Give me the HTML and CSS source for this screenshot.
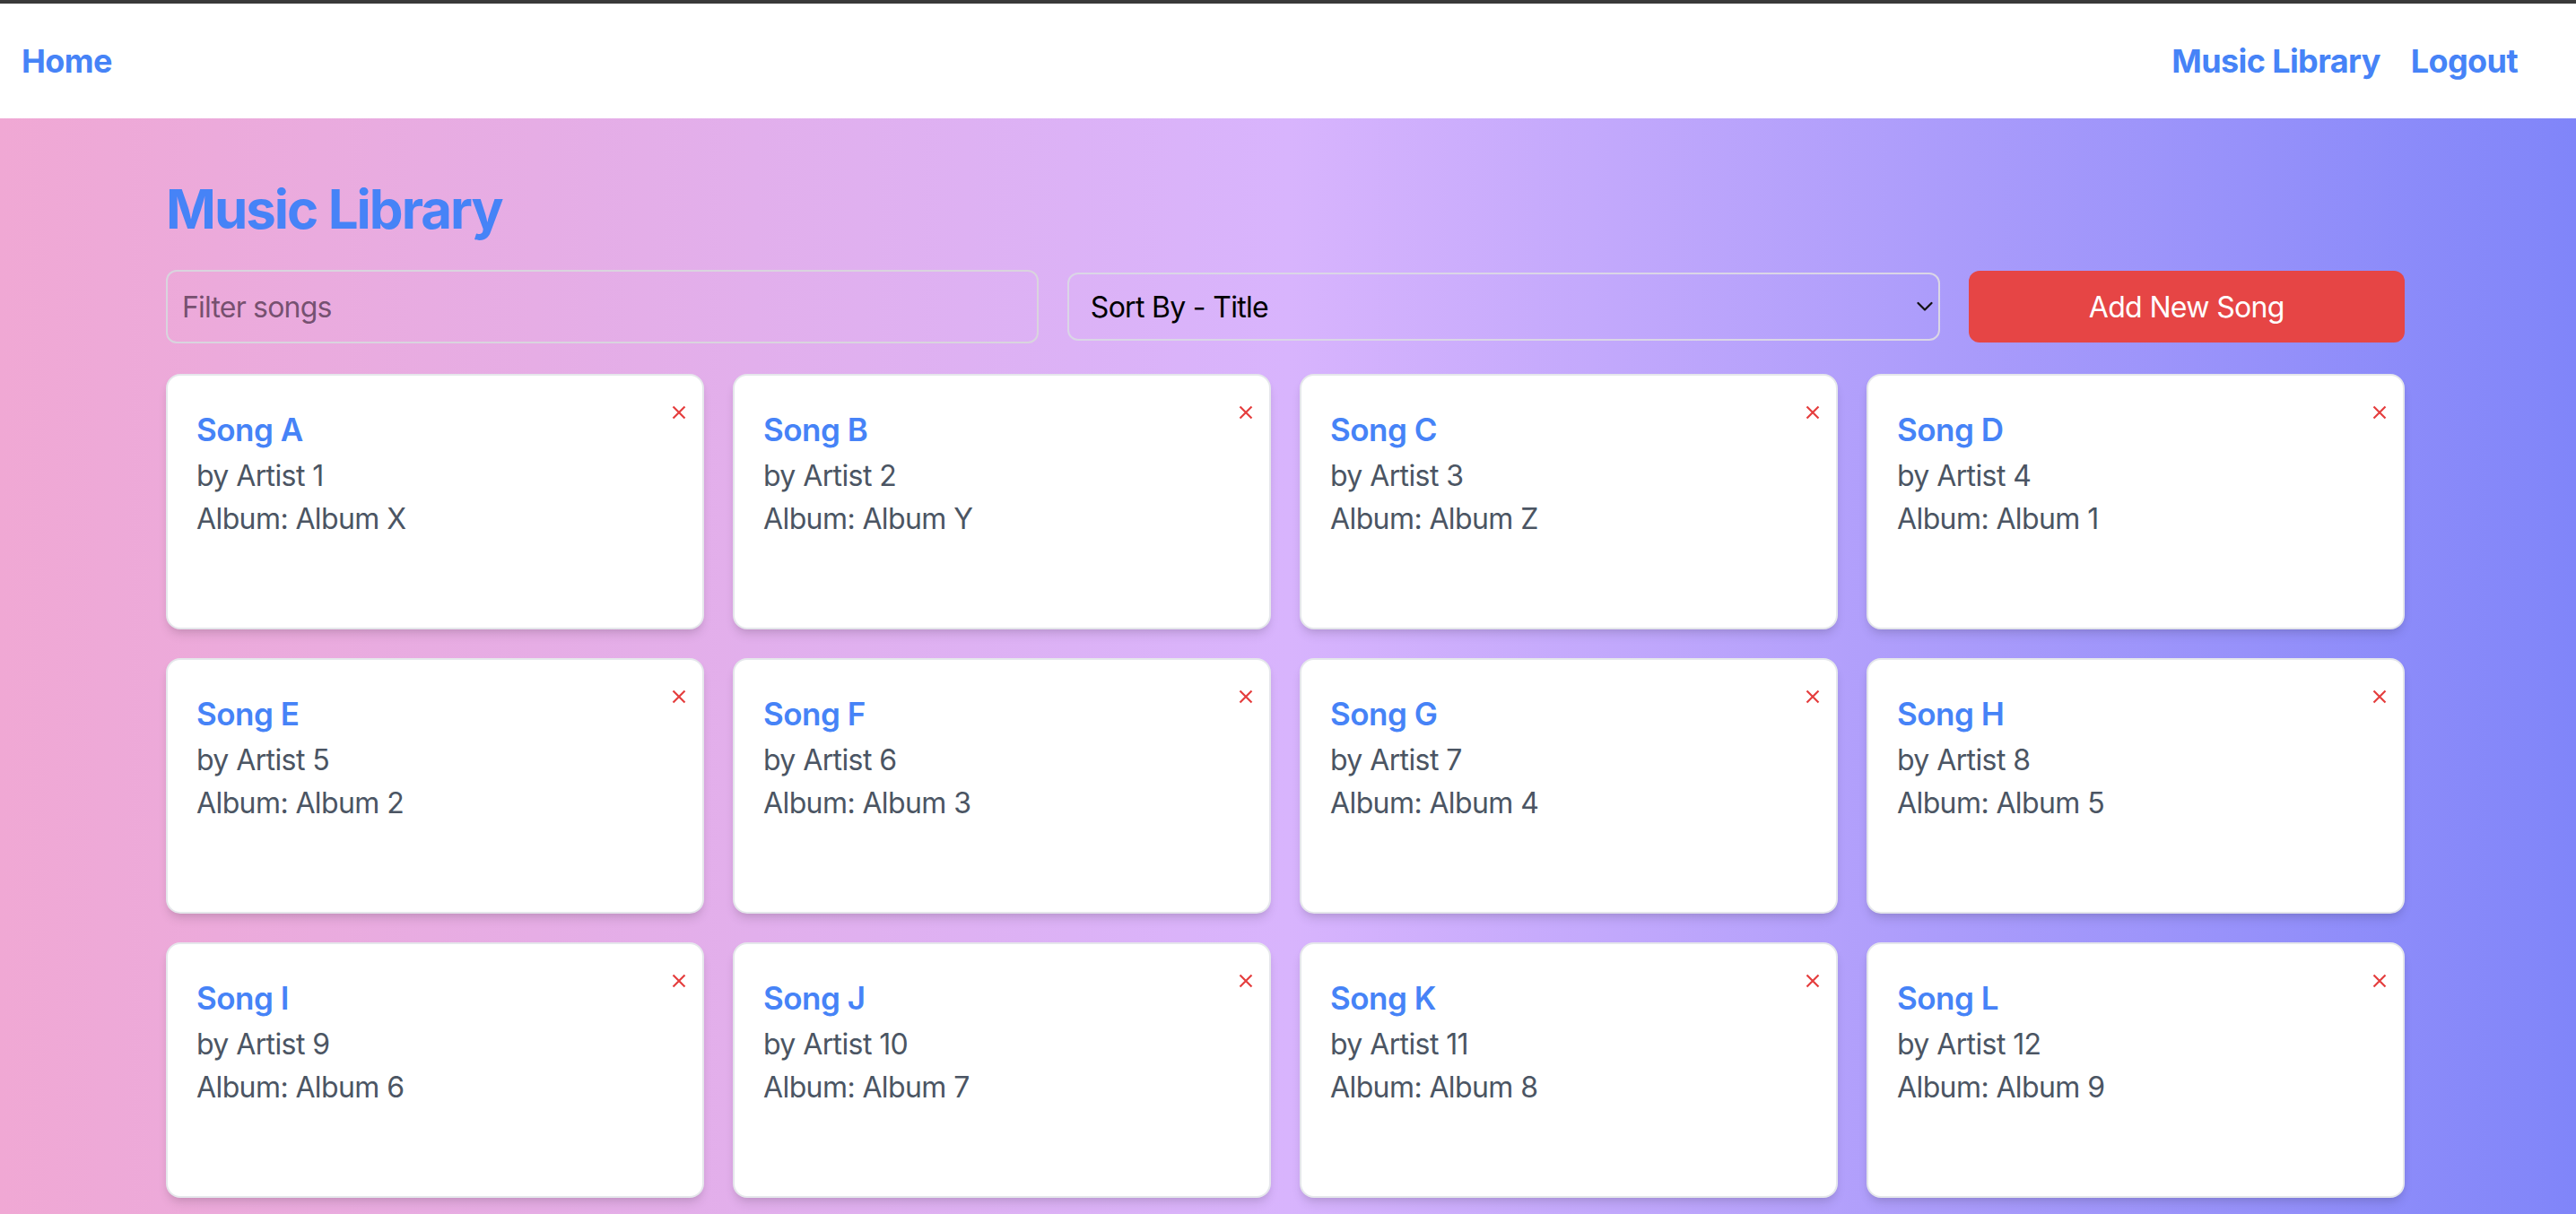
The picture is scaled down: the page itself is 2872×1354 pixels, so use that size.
FILE: index.html
```html
<!DOCTYPE html>
<html lang="en">
<head>
<meta charset="utf-8">
<title>Music Library</title>
<link rel="stylesheet" href="styles.css">
</head>
<body>
<nav class="nav">
  <a class="nav-link" href="#">Home</a>
  <div class="nav-right">
    <a class="nav-link" href="#">Music Library</a>
    <a class="nav-link" href="#">Logout</a>
  </div>
</nav>
<main class="main">
  <div class="container">
    <h1 class="title">Music Library</h1>
    <div class="controls">
      <input class="filter" type="text" placeholder="Filter songs">
      <div class="select-wrap">
        <select class="sort">
          <option>Sort By - Title</option>
          <option>Sort By - Artist</option>
          <option>Sort By - Album</option>
        </select>
        <svg class="chevron" width="18" height="12" viewBox="0 0 18 12"><path d="M1.5 2 L9 9.5 L16.5 2" fill="none" stroke="#111" stroke-width="2.2" stroke-linecap="round" stroke-linejoin="round"/></svg>
      </div>
      <button class="add-btn">Add New Song</button>
    </div>
    <div class="grid">
      <div class="card"><button class="close" aria-label="Delete"><svg width="16" height="16" viewBox="0 0 16 16"><path d="M1.5 1.5 L14.5 14.5 M14.5 1.5 L1.5 14.5" stroke="#e53e3e" stroke-width="2.2"/></svg></button><h2 class="song">Song A</h2><p class="meta">by Artist 1</p><p class="meta">Album: Album X</p></div>
      <div class="card"><button class="close" aria-label="Delete"><svg width="16" height="16" viewBox="0 0 16 16"><path d="M1.5 1.5 L14.5 14.5 M14.5 1.5 L1.5 14.5" stroke="#e53e3e" stroke-width="2.2"/></svg></button><h2 class="song">Song B</h2><p class="meta">by Artist 2</p><p class="meta">Album: Album Y</p></div>
      <div class="card"><button class="close" aria-label="Delete"><svg width="16" height="16" viewBox="0 0 16 16"><path d="M1.5 1.5 L14.5 14.5 M14.5 1.5 L1.5 14.5" stroke="#e53e3e" stroke-width="2.2"/></svg></button><h2 class="song">Song C</h2><p class="meta">by Artist 3</p><p class="meta">Album: Album Z</p></div>
      <div class="card"><button class="close" aria-label="Delete"><svg width="16" height="16" viewBox="0 0 16 16"><path d="M1.5 1.5 L14.5 14.5 M14.5 1.5 L1.5 14.5" stroke="#e53e3e" stroke-width="2.2"/></svg></button><h2 class="song">Song D</h2><p class="meta">by Artist 4</p><p class="meta">Album: Album 1</p></div>
      <div class="card"><button class="close" aria-label="Delete"><svg width="16" height="16" viewBox="0 0 16 16"><path d="M1.5 1.5 L14.5 14.5 M14.5 1.5 L1.5 14.5" stroke="#e53e3e" stroke-width="2.2"/></svg></button><h2 class="song">Song E</h2><p class="meta">by Artist 5</p><p class="meta">Album: Album 2</p></div>
      <div class="card"><button class="close" aria-label="Delete"><svg width="16" height="16" viewBox="0 0 16 16"><path d="M1.5 1.5 L14.5 14.5 M14.5 1.5 L1.5 14.5" stroke="#e53e3e" stroke-width="2.2"/></svg></button><h2 class="song">Song F</h2><p class="meta">by Artist 6</p><p class="meta">Album: Album 3</p></div>
      <div class="card"><button class="close" aria-label="Delete"><svg width="16" height="16" viewBox="0 0 16 16"><path d="M1.5 1.5 L14.5 14.5 M14.5 1.5 L1.5 14.5" stroke="#e53e3e" stroke-width="2.2"/></svg></button><h2 class="song">Song G</h2><p class="meta">by Artist 7</p><p class="meta">Album: Album 4</p></div>
      <div class="card"><button class="close" aria-label="Delete"><svg width="16" height="16" viewBox="0 0 16 16"><path d="M1.5 1.5 L14.5 14.5 M14.5 1.5 L1.5 14.5" stroke="#e53e3e" stroke-width="2.2"/></svg></button><h2 class="song">Song H</h2><p class="meta">by Artist 8</p><p class="meta">Album: Album 5</p></div>
      <div class="card"><button class="close" aria-label="Delete"><svg width="16" height="16" viewBox="0 0 16 16"><path d="M1.5 1.5 L14.5 14.5 M14.5 1.5 L1.5 14.5" stroke="#e53e3e" stroke-width="2.2"/></svg></button><h2 class="song">Song I</h2><p class="meta">by Artist 9</p><p class="meta">Album: Album 6</p></div>
      <div class="card"><button class="close" aria-label="Delete"><svg width="16" height="16" viewBox="0 0 16 16"><path d="M1.5 1.5 L14.5 14.5 M14.5 1.5 L1.5 14.5" stroke="#e53e3e" stroke-width="2.2"/></svg></button><h2 class="song">Song J</h2><p class="meta">by Artist 10</p><p class="meta">Album: Album 7</p></div>
      <div class="card"><button class="close" aria-label="Delete"><svg width="16" height="16" viewBox="0 0 16 16"><path d="M1.5 1.5 L14.5 14.5 M14.5 1.5 L1.5 14.5" stroke="#e53e3e" stroke-width="2.2"/></svg></button><h2 class="song">Song K</h2><p class="meta">by Artist 11</p><p class="meta">Album: Album 8</p></div>
      <div class="card"><button class="close" aria-label="Delete"><svg width="16" height="16" viewBox="0 0 16 16"><path d="M1.5 1.5 L14.5 14.5 M14.5 1.5 L1.5 14.5" stroke="#e53e3e" stroke-width="2.2"/></svg></button><h2 class="song">Song L</h2><p class="meta">by Artist 12</p><p class="meta">Album: Album 9</p></div>
    </div>
  </div>
</main>
</body>
</html>
```
FILE: styles.css
```css
* { box-sizing: border-box; }

html, body {
  margin: 0;
  padding: 0;
}

body {
  font-family: Inter, "Noto Sans", "Liberation Sans", sans-serif;
  background: #ffffff;
  letter-spacing: -0.02em;
}

.nav {
  height: 132px;
  border-top: 4px solid #3a3a3a;
  background: #ffffff;
  display: flex;
  align-items: center;
  justify-content: space-between;
  padding: 0 65px 0 24px;
}

.nav-right {
  display: flex;
  align-items: center;
  gap: 34px;
}

.nav-link {
  font-size: 36px;
  font-weight: 700;
  color: #4683f7;
  text-decoration: none;
  line-height: 1;
  letter-spacing: -0.6px;
}

.main {
  min-height: calc(100vh - 132px);
  background: linear-gradient(to right, #f0a8d4 0%, #d8b4fd 50%, #8085f9 100%);
  padding: 65px 0 64px;
}

.container {
  width: 2496px;
  margin-left: 185px;
}

.title {
  margin: 0 0 32px;
  font-size: 60px;
  line-height: 72px;
  font-weight: 700;
  color: #4683f7;
  letter-spacing: -2px;
}

.controls {
  display: grid;
  grid-template-columns: minmax(0, 2fr) minmax(0, 2fr) minmax(0, 1fr);
  align-items: center;
  column-gap: 32px;
  margin-bottom: 34px;
}

.filter {
  width: 100%;
  height: 82px;
  border: 2px solid #d9d4de;
  border-radius: 12px;
  background: transparent;
  padding: 0 16px;
  font-family: inherit;
  font-size: 32px;
  letter-spacing: -0.8px;
  color: #111;
  outline: none;
}

.filter::placeholder {
  color: rgba(40, 20, 40, 0.62);
}

.select-wrap {
  position: relative;
}

.sort {
  display: block;
  width: 100%;
  height: 76px;
  border: 2px solid #dad6e6;
  border-radius: 12px;
  background: transparent;
  padding: 0 24px;
  font-family: inherit;
  font-size: 32px;
  letter-spacing: -0.7px;
  color: #000;
  -webkit-appearance: none;
  appearance: none;
  outline: none;
}

.chevron {
  position: absolute;
  right: 8px;
  top: 32px;
  pointer-events: none;
}

.add-btn {
  width: 100%;
  height: 80px;
  border: none;
  border-radius: 12px;
  background: #e64545;
  color: #ffffff;
  font-family: inherit;
  font-size: 32px;
  letter-spacing: -0.65px;
  font-weight: 400;
}

.grid {
  display: grid;
  grid-template-columns: repeat(4, minmax(0, 1fr));
  gap: 32px;
}

.card {
  position: relative;
  min-height: 285px;
  background: #ffffff;
  border: 2px solid #e5e7eb;
  border-radius: 16px;
  padding: 32px;
  box-shadow: 0 8px 12px -2px rgba(0, 0, 0, 0.1), 0 4px 8px -4px rgba(0, 0, 0, 0.1);
}

.close {
  position: absolute;
  top: 25px;
  right: 10px;
  width: 32px;
  height: 32px;
  padding: 0;
  border: none;
  background: transparent;
  display: flex;
  align-items: center;
  justify-content: center;
}

.song {
  margin: 0;
  font-size: 35px;
  line-height: 56px;
  font-weight: 600;
  color: #4683f7;
  letter-spacing: -0.5px;
}

.meta {
  margin: 0;
  font-size: 32px;
  line-height: 48px;
  color: #4b5563;
  letter-spacing: -0.6px;
}
```
